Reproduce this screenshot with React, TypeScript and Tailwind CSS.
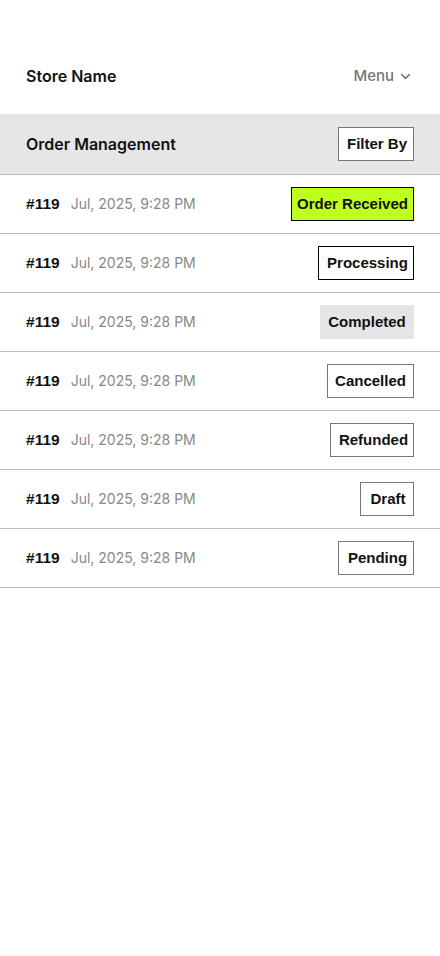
import { ChevronDown } from "lucide-react";

type Order = {
  id: number;
  date: string;
  status: string;
};

const orders: Order[] = [
  { id: 119, date: "Jul, 2025, 9:28 PM", status: "Order Received" },
  { id: 119, date: "Jul, 2025, 9:28 PM", status: "Processing" },
  { id: 119, date: "Jul, 2025, 9:28 PM", status: "Completed" },
  { id: 119, date: "Jul, 2025, 9:28 PM", status: "Cancelled" },
  { id: 119, date: "Jul, 2025, 9:28 PM", status: "Refunded" },
  { id: 119, date: "Jul, 2025, 9:28 PM", status: "Draft" },
  { id: 119, date: "Jul, 2025, 9:28 PM", status: "Pending" },
];

const badgeStyles: Record<string, string> = {
  "Order Received": "w-[123px] border-black bg-[#bfff1f]",
  Processing: "w-[96px] border-black bg-white pl-[3px]",
  Completed: "w-[94px] border-transparent bg-[#e5e5e5]",
  Cancelled: "w-[87px] border-[#777] bg-white",
  Refunded: "w-[84px] border-[#777] bg-white pl-[3px]",
  Draft: "w-[54px] border-[#777] bg-white pl-[2px]",
  Pending: "w-[76px] border-[#777] bg-white pl-[3px]",
};

function StatusBadge({ status }: { status: string }) {
  return (
    <div
      className={`flex h-[34px] items-center justify-center border font-['Liberation_Sans',Arial,sans-serif] text-[15px] font-bold text-[#111] ${badgeStyles[status]}`}
    >
      {status}
    </div>
  );
}

export default function App() {
  return (
    <div className="min-h-[956px] w-full bg-white font-['Inter',sans-serif] text-[#111]">
      <header className="flex h-[114px] items-end">
        <div className="flex h-[76px] w-full items-center justify-between px-[26px]">
          <span className="text-[16px] font-semibold">Store Name</span>
          <button className="flex items-center gap-[4px] pr-[1px] text-[15px] font-medium text-[#777]">
            Menu
            <ChevronDown size={15} strokeWidth={2.5} className="text-[#777]" />
          </button>
        </div>
      </header>

      <div className="flex h-[61px] items-center justify-between border-b border-[#bbb] bg-[#e6e6e6] pl-[26px] pr-[26px]">
        <h1 className="text-[16px] font-semibold">Order Management</h1>
        <button className="flex h-[34px] w-[76px] items-center justify-center border border-[#777] bg-white pl-[2px] font-['Liberation_Sans',Arial,sans-serif] text-[15px] font-bold text-[#111]">
          Filter By
        </button>
      </div>

      <ul>
        {orders.map((order, i) => (
          <li
            key={i}
            className="flex h-[59px] items-center justify-between border-b border-[#bbb] px-[26px]"
          >
            <div className="flex items-baseline gap-[11px]">
              <span className="font-['Liberation_Sans',Arial,sans-serif] text-[15.5px] font-bold">
                #{order.id}
              </span>
              <span className="text-[14px] text-[#888]">{order.date}</span>
            </div>
            <StatusBadge status={order.status} />
          </li>
        ))}
      </ul>
    </div>
  );
}
